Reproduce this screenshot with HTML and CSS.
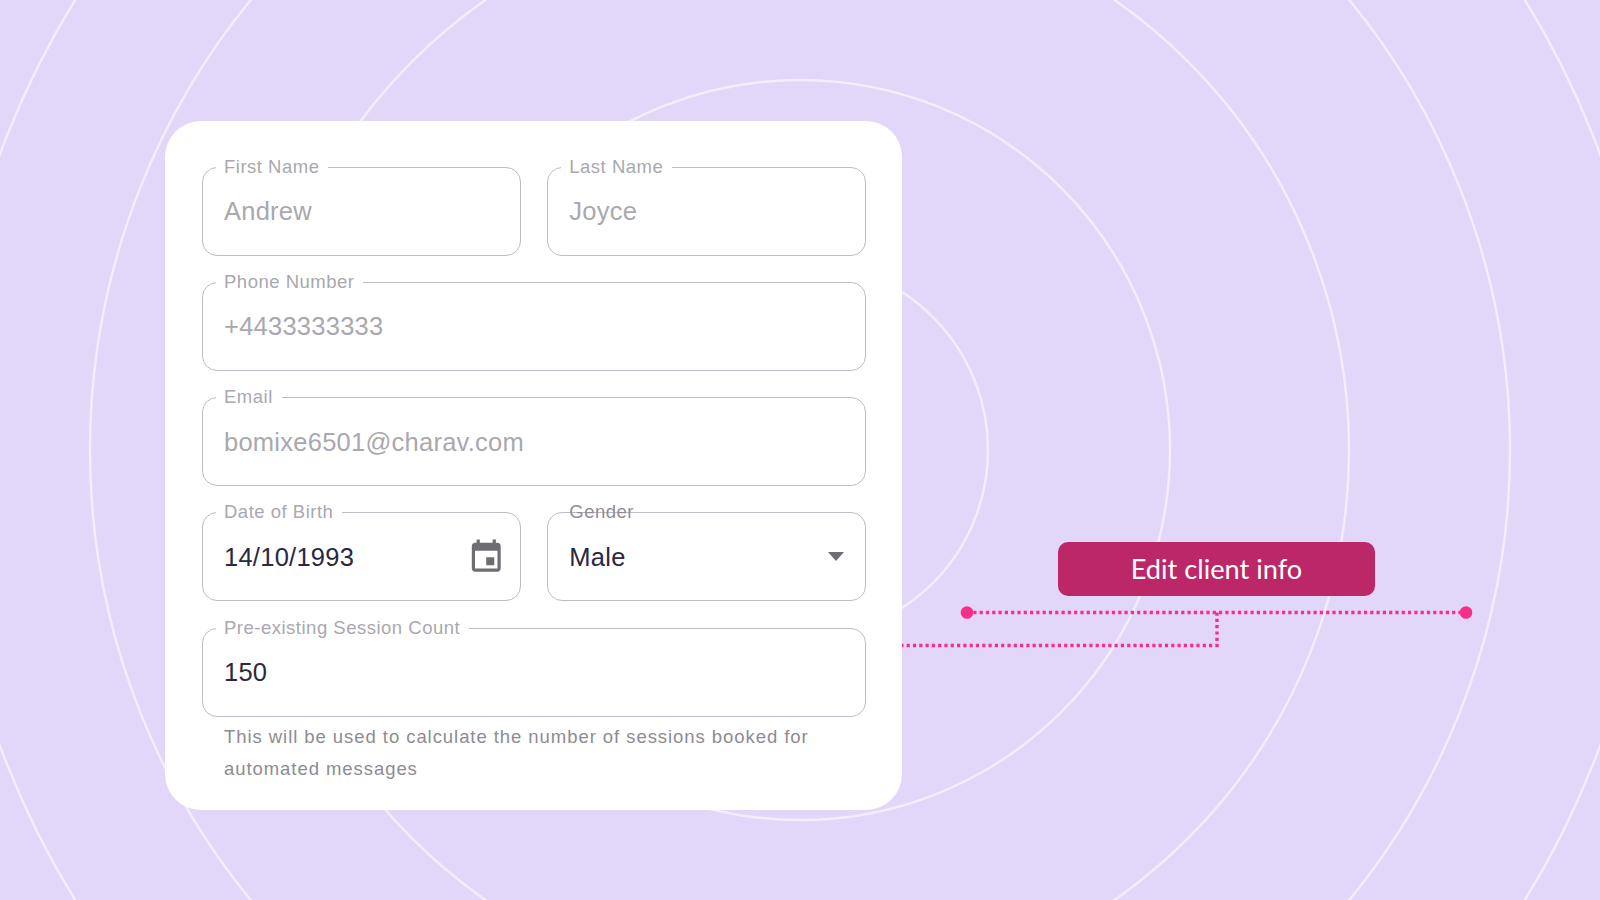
FILE: index.html
```html
<!DOCTYPE html>
<html lang="en">
<head>
<meta charset="utf-8">
<title>Edit client info</title>
<link rel="stylesheet" href="styles.css">
</head>
<body>
<main class="stage">
  <svg class="rings" width="1600" height="900" viewBox="0 0 1600 900" aria-hidden="true">
    <circle cx="800" cy="450" r="188"/>
    <circle cx="800" cy="450" r="370"/>
    <circle cx="800" cy="450" r="549"/>
    <circle cx="800" cy="450" r="710"/>
    <circle cx="800" cy="450" r="853"/>
  </svg>
  <form class="card">
    <div class="grid">
      <div class="field"><span class="label">First Name</span><span class="value muted">Andrew</span></div>
      <div class="field"><span class="label">Last Name</span><span class="value muted">Joyce</span></div>
      <div class="field wide"><span class="label">Phone Number</span><span class="value muted">+4433333333</span></div>
      <div class="field wide"><span class="label">Email</span><span class="value muted">bomixe6501@charav.com</span></div>
      <div class="field">
        <span class="label">Date of Birth</span><span class="value">14/10/1993</span>
        <svg class="cal" width="38.5" height="38.5" viewBox="0 0 24 24"><path d="M19 3h-1V1h-2v2H8V1H6v2H5c-1.1 0-2 .9-2 2v14c0 1.1.9 2 2 2h14c1.1 0 2-.9 2-2V5c0-1.1-.9-2-2-2zm0 16H5V8h14v11zm-2-7h-5v5h5v-5z"/></svg>
      </div>
      <div class="field">
        <span class="label bare">Gender</span><span class="value">Male</span>
        <svg class="caret" width="16" height="9" viewBox="0 0 16 9"><path d="M0 0h16L8 9z"/></svg>
      </div>
      <div class="field wide"><span class="label">Pre-existing Session Count</span><span class="value">150</span></div>
    </div>
    <p class="help">This will be used to calculate the number of sessions booked for automated messages</p>
  </form>
  <aside class="callout"><div class="tag">Edit client info</div></aside>
  <svg class="wire" width="1600" height="900" viewBox="0 0 1600 900" aria-hidden="true">
    <path class="dots" d="M967 612.5H1466M1217 612.5V645.5H902"/>
    <circle cx="967" cy="612.5" r="6.3"/>
    <circle cx="1466" cy="612.5" r="6.3"/>
  </svg>
</main>
</body>
</html>
```
FILE: styles.css
```css
* { box-sizing: border-box; }
html, body { margin: 0; }
body { background: #e2d7f8; }
.stage {
  position: relative;
  width: 1600px;
  height: 900px;
  overflow: hidden;
  display: flex;
  align-items: flex-start;
  padding: 121px 0 0 165px;
  background: #e2d7f8;
  font-family: "Liberation Sans", Arial, sans-serif;
}
.rings, .wire { position: absolute; left: 0; top: 0; }
.rings { fill: none; stroke: #f2eefc; stroke-width: 2.4; }
.wire { fill: #f72f8b; }
.dots { fill: none; stroke: #f72f8b; stroke-width: 3.4; stroke-dasharray: 3.2 3.1; }
.card {
  position: relative;
  width: 737px;
  height: 689px;
  padding: 45.5px 36px 0 37px;
  background: #fff;
  border-radius: 36px;
}
.grid {
  display: grid;
  grid-template-columns: 319px 319px;
  grid-auto-rows: 89px;
  gap: 26.3px;
}
.wide { grid-column: 1 / 3; }
.field {
  position: relative;
  display: flex;
  align-items: center;
  justify-content: space-between;
  padding: 0 21px;
  border: 1.5px solid #bdbbc3;
  border-radius: 15px;
}
.label {
  position: absolute;
  left: 13px;
  top: -13px;
  padding: 0 9px 0 8px;
  background: #fff;
  color: #a9a8ae;
  font-size: 18.5px;
  line-height: 24px;
  letter-spacing: .5px;
}
.label.bare { background: none; color: #8f8d95; }
.value {
  padding-top: 1px;
  color: #2a2740;
  font-size: 25.5px;
  letter-spacing: .25px;
}
.value.muted { color: #a9a8ae; }
.cal { fill: #6f6d74; margin-right: -6.5px; }
.caret { fill: #6f6d74; }
.help {
  margin: 4.5px 0 0 22px;
  width: 620px;
  color: #8d8b93;
  font-size: 18.5px;
  line-height: 32px;
  letter-spacing: .94px;
}
.callout {
  position: relative;
  margin: 421px 0 0 156px;
}
.tag {
  width: 317px;
  height: 54px;
  display: flex;
  align-items: center;
  justify-content: center;
  padding-bottom: 2px;
  background: #bc2768;
  border-radius: 10px;
  color: #fff;
  font-family: Lato, sans-serif;
  font-size: 27.2px;
}
```
